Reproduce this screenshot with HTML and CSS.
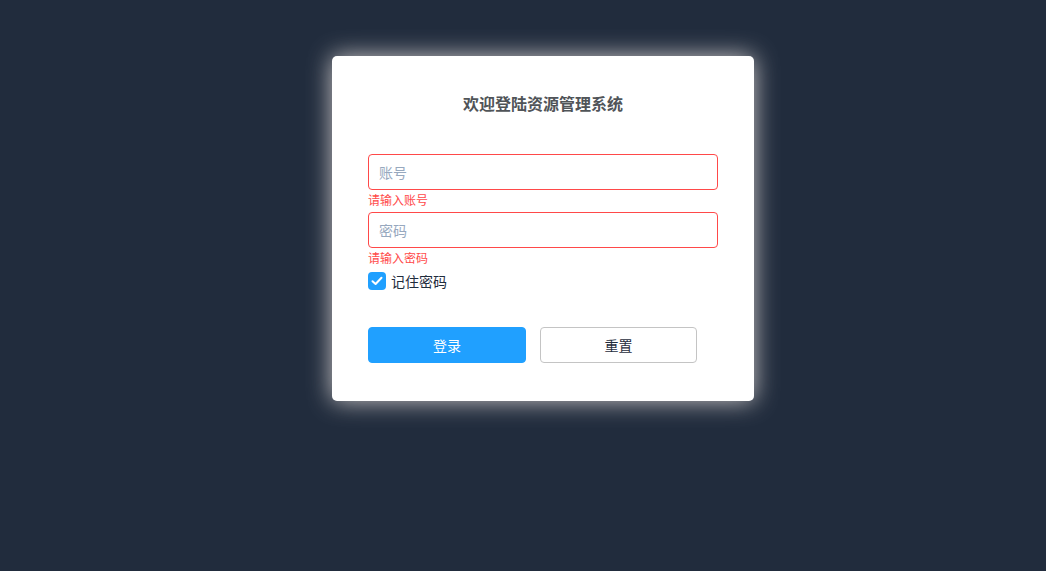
FILE: index.html
```html
<!DOCTYPE html>
<html lang="zh-CN">
  <head>
    <meta charset="UTF-8" />
    <meta name="viewport" content="width=device-width, initial-scale=1.0" />
    <title>登录</title>
    <link rel="stylesheet" href="styles.css">
  </head>
  <body>
    <form class="login-box">
      <h3 class="login-title">欢迎登陆资源管理系统</h3>
      <div class="form-item">
        <input class="form-input" type="text" placeholder="账号" />
        <div class="form-error">请输入账号</div>
      </div>
      <div class="form-item">
        <input class="form-input" type="password" placeholder="密码" />
        <div class="form-error">请输入密码</div>
      </div>
      <label class="remember">
        <span class="check">
          <svg width="12" height="10" viewBox="0 0 12 10"><path d="M1.5 5.2 L4.6 8 L10.5 1.8" fill="none" stroke="#fff" stroke-width="2" stroke-linecap="round" stroke-linejoin="round"/></svg>
        </span>
        <span>记住密码</span>
      </label>
      <div class="btns">
        <button type="button" class="btn btn-primary">登录</button>
        <button type="button" class="btn btn-default">重置</button>
      </div>
    </form>
  </body>
</html>
```

FILE: styles.css
```css
html,
body {
  margin: 0;
  height: 100%;
}

body {
  background: #212c3d;
  font-family: "Noto Sans CJK SC", "Liberation Sans", sans-serif;
  overflow: hidden;
}

.login-box {
  box-sizing: border-box;
  width: 422px;
  margin: 56px 0 0 332px;
  padding: 35px 36px 38px;
  background: #fff;
  border-radius: 5px;
  box-shadow: 0 0 25px #cac6c6;
}

.login-title {
  margin: 0 0 39px;
  text-align: center;
  font-size: 16px;
  line-height: 24px;
  font-weight: bold;
  color: #505458;
}

.form-item {
  margin-bottom: 22px;
  position: relative;
}

.form-input {
  display: block;
  box-sizing: border-box;
  width: 350px;
  height: 36px;
  padding: 0 10px;
  border: 1px solid #ff4949;
  border-radius: 4px;
  font-family: inherit;
  font-size: 14px;
  color: #1f2d3d;
  outline: none;
}

.form-input::placeholder {
  color: #97a8be;
}

.form-error {
  position: absolute;
  top: 100%;
  left: 0;
  padding-top: 4px;
  font-size: 12px;
  line-height: 1;
  color: #ff4949;
}

.remember {
  display: flex;
  align-items: center;
  height: 22px;
  margin-bottom: 35px;
  font-size: 14px;
  color: #1f2d3d;
  cursor: pointer;
}

.check {
  display: flex;
  align-items: center;
  justify-content: center;
  width: 18px;
  height: 18px;
  margin-right: 5px;
  background: #20a0ff;
  border-radius: 4px;
}

.btns {
  display: flex;
  gap: 14px;
}

.btn {
  width: 158px;
  height: 36px;
  border-radius: 4px;
  font-family: inherit;
  font-size: 14px;
  cursor: pointer;
}

.btn-primary {
  background: #20a0ff;
  border: 1px solid #20a0ff;
  color: #fff;
}

.btn-default {
  width: 157px;
  background: #fff;
  border: 1px solid #c4c4c4;
  color: #1f2d3d;
}
```
